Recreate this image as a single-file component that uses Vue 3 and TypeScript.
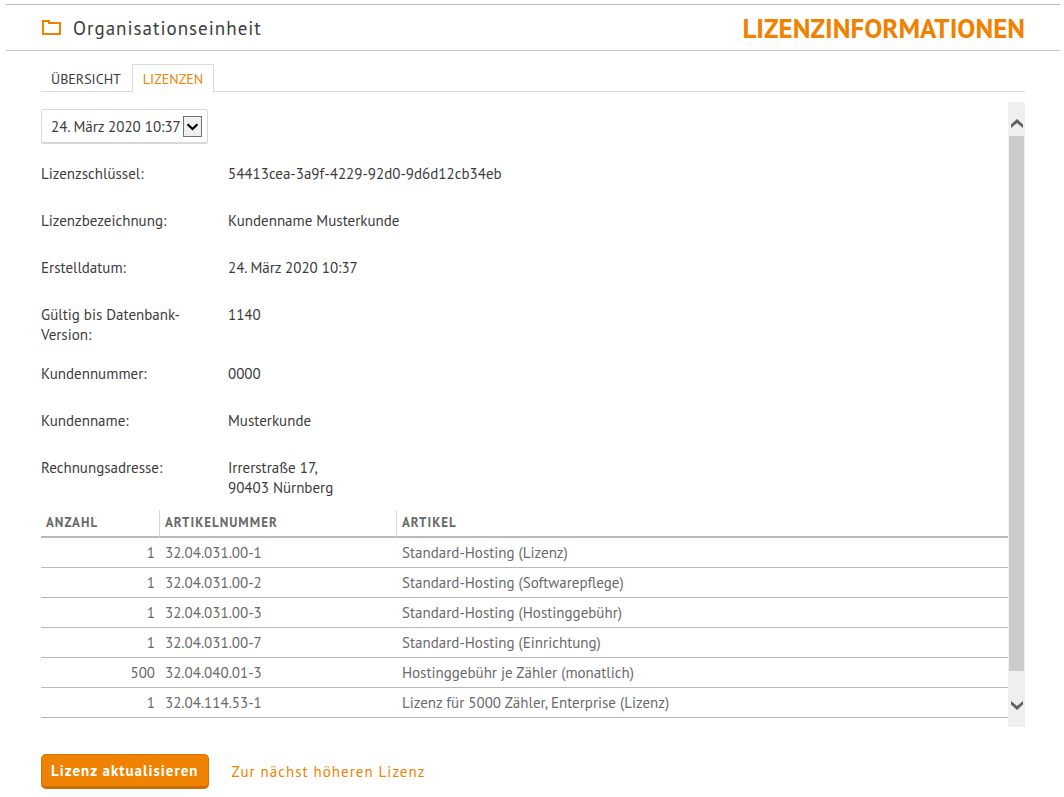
<script setup lang="ts">
import { ref } from 'vue'

interface Detail {
  label: string
  lines: string[]
}

interface Article {
  count: number
  number: string
  name: string
}

const created = '24. März 2020 10:37'
const selected = ref(created)

const details: Detail[] = [
  { label: 'Lizenzschlüssel:', lines: ['54413cea-3a9f-4229-92d0-9d6d12cb34eb'] },
  { label: 'Lizenzbezeichnung:', lines: ['Kundenname Musterkunde'] },
  { label: 'Erstelldatum:', lines: [created] },
  { label: 'Gültig bis Datenbank-Version:', lines: ['1140'] },
  { label: 'Kundennummer:', lines: ['0000'] },
  { label: 'Kundenname:', lines: ['Musterkunde'] },
  { label: 'Rechnungsadresse:', lines: ['Irrerstraße 17,', '90403 Nürnberg'] },
]

const articles: Article[] = [
  { count: 1, number: '32.04.031.00-1', name: 'Standard-Hosting (Lizenz)' },
  { count: 1, number: '32.04.031.00-2', name: 'Standard-Hosting (Softwarepflege)' },
  { count: 1, number: '32.04.031.00-3', name: 'Standard-Hosting (Hostinggebühr)' },
  { count: 1, number: '32.04.031.00-7', name: 'Standard-Hosting (Einrichtung)' },
  { count: 500, number: '32.04.040.01-3', name: 'Hostinggebühr je Zähler (monatlich)' },
  { count: 1, number: '32.04.114.53-1', name: 'Lizenz für 5000 Zähler, Enterprise (Lizenz)' },
]
</script>

<template>
  <div class="page">
    <header class="header">
      <svg class="folder" viewBox="0 0 19 15" width="19" height="15" aria-hidden="true">
        <path d="M1 14V1H7V3H18V14Z" fill="none" stroke="#ef8200" stroke-width="2" />
      </svg>
      <h1 class="unit">Organisationseinheit</h1>
      <h2 class="title">LIZENZINFORMATIONEN</h2>
    </header>

    <main class="main">
      <nav class="tabs">
        <a class="tab" href="#uebersicht">ÜBERSICHT</a>
        <a class="tab active" href="#lizenzen" aria-current="page">LIZENZEN</a>
      </nav>

      <div class="panel">
        <section class="content">
          <div class="picker">
            <select v-model="selected" class="select" aria-label="Lizenz">
              <option>{{ created }}</option>
            </select>
            <span class="arrow" aria-hidden="true">
              <svg viewBox="0 0 11 8" width="11" height="8">
                <path d="M0.5 1.2L5.5 6L10.5 1.2" fill="none" stroke="#000" stroke-width="2.2" />
              </svg>
            </span>
          </div>

          <dl class="details">
            <div v-for="d in details" :key="d.label" class="detail">
              <dt>{{ d.label }}</dt>
              <dd><span v-for="line in d.lines" :key="line" class="line">{{ line }}</span></dd>
            </div>
          </dl>

          <table class="table">
            <thead>
              <tr>
                <th class="col-count" scope="col">ANZAHL</th>
                <th class="col-number" scope="col">ARTIKELNUMMER</th>
                <th scope="col">ARTIKEL</th>
              </tr>
            </thead>
            <tbody>
              <tr v-for="a in articles" :key="a.number">
                <td class="count">{{ a.count }}</td>
                <td>{{ a.number }}</td>
                <td>{{ a.name }}</td>
              </tr>
            </tbody>
          </table>
        </section>

        <div class="scrollbar">
          <button class="step up" type="button" aria-label="Nach oben">
            <svg viewBox="0 0 12 9" width="12" height="9">
              <path d="M0 5.4L6 0L12 5.4V9L6 4L0 9Z" fill="#606060" />
            </svg>
          </button>
          <div class="track"><div class="thumb"></div></div>
          <button class="step down" type="button" aria-label="Nach unten">
            <svg viewBox="0 0 12 9" width="12" height="9">
              <path d="M0 3.6L6 9L12 3.6V0L6 5L0 0Z" fill="#606060" />
            </svg>
          </button>
        </div>
      </div>

      <footer class="actions">
        <button class="primary" type="button">Lizenz aktualisieren</button>
        <a class="link" href="#upgrade">Zur nächst höheren Lizenz</a>
      </footer>
    </main>
  </div>
</template>

<style>
body {
  margin: 0;
  background: #fff;
}
</style>

<style scoped>
.page {
  padding: 4px 4px 8px 6px;
  font-family: "PT Sans", Lato, "Noto Sans", sans-serif;
  font-size: 15px;
  line-height: 20px;
  color: #3c3c3c;
}

.page * {
  box-sizing: border-box;
}

.header {
  display: flex;
  align-items: center;
  height: 47px;
  padding: 0 35px 0 36px;
  border-top: 1px solid #b9b9b9;
  border-bottom: 1px solid #c8c8c8;
}

.folder {
  flex: none;
}

.unit {
  margin: 0 0 0 12px;
  font-size: 19px;
  line-height: 24px;
  font-weight: 400;
  letter-spacing: 1px;
}

.title {
  margin: 0 0 0 auto;
  font-size: 27px;
  line-height: 32px;
  font-weight: 700;
  color: #ef8200;
}

.main {
  padding: 13px 35px 0;
}

.tabs {
  display: flex;
  height: 28px;
  border-bottom: 1px solid #dadada;
}

.tab {
  height: 28px;
  padding: 4px 10px;
  border: 1px solid transparent;
  border-bottom: 0;
  font-size: 14px;
  color: #3c3c3c;
  text-decoration: none;
}

.tab:first-child {
  padding-left: 9px;
}

.tab.active {
  border-color: #dadada;
  background: #fff;
  color: #ef8200;
}

.panel {
  display: flex;
  margin-top: 10px;
}

.content {
  flex: 1;
  min-width: 0;
  padding: 7px 0 9px;
}

.picker {
  position: relative;
  width: 167px;
}

.select {
  display: block;
  width: 100%;
  height: 35px;
  padding: 2px 26px 0 9px;
  appearance: none;
  border: 1px solid #d8d8d8;
  border-bottom-width: 2px;
  border-radius: 2px;
  background: #fff;
  font: inherit;
  color: inherit;
}

.arrow {
  position: absolute;
  top: 7px;
  right: 6px;
  display: flex;
  align-items: center;
  justify-content: center;
  width: 19px;
  height: 21px;
  border: 1px solid #707070;
  background: #efefef;
  pointer-events: none;
}

.details {
  display: flex;
  flex-direction: column;
  gap: 19px;
  margin: 20px 0 12px;
}

.detail {
  display: grid;
  grid-template-columns: 150px 1fr;
  column-gap: 37px;
  min-height: 28px;
}

.detail dd {
  margin: 0;
}

.line {
  display: block;
}

.table {
  width: 100%;
  border-collapse: separate;
  border-spacing: 0;
  table-layout: fixed;
  color: #6a6a6a;
}

.table th {
  height: 28px;
  padding: 0 5px;
  border-right: 1px solid #dadada;
  border-bottom: 2px solid #b9b9b9;
  font-size: 13px;
  line-height: 16px;
  text-align: left;
  letter-spacing: 1px;
}

.table th:last-child {
  border-right: 0;
}

.col-count {
  width: 119px;
}

.col-number {
  width: 237px;
}

.table td {
  height: 30px;
  padding: 0 5px;
  border-bottom: 1px solid #b9b9b9;
}

.table .count {
  text-align: right;
}

.scrollbar {
  display: flex;
  flex-direction: column;
  width: 17px;
  background: #efefef;
}

.step {
  display: flex;
  justify-content: center;
  height: 34px;
  padding: 0;
  border: 0;
  background: none;
}

.up {
  align-items: flex-end;
  padding-bottom: 8px;
}

.down {
  align-items: flex-start;
  padding-top: 8px;
}

.track {
  flex: 1;
  padding: 0 1px;
}

.thumb {
  height: 96%;
  background: #cbcbcb;
}

.actions {
  display: flex;
  align-items: center;
  gap: 23px;
  margin-top: 27px;
}

.primary {
  height: 35px;
  padding: 0 9px;
  border: 1px solid #d67400;
  border-bottom: 3px solid #cc6d00;
  border-radius: 5px;
  background: #ef8200;
  font: inherit;
  font-weight: 700;
  letter-spacing: 1px;
  color: #fff;
}

.link {
  color: #ef8200;
  letter-spacing: 1px;
  text-decoration: none;
}
</style>
